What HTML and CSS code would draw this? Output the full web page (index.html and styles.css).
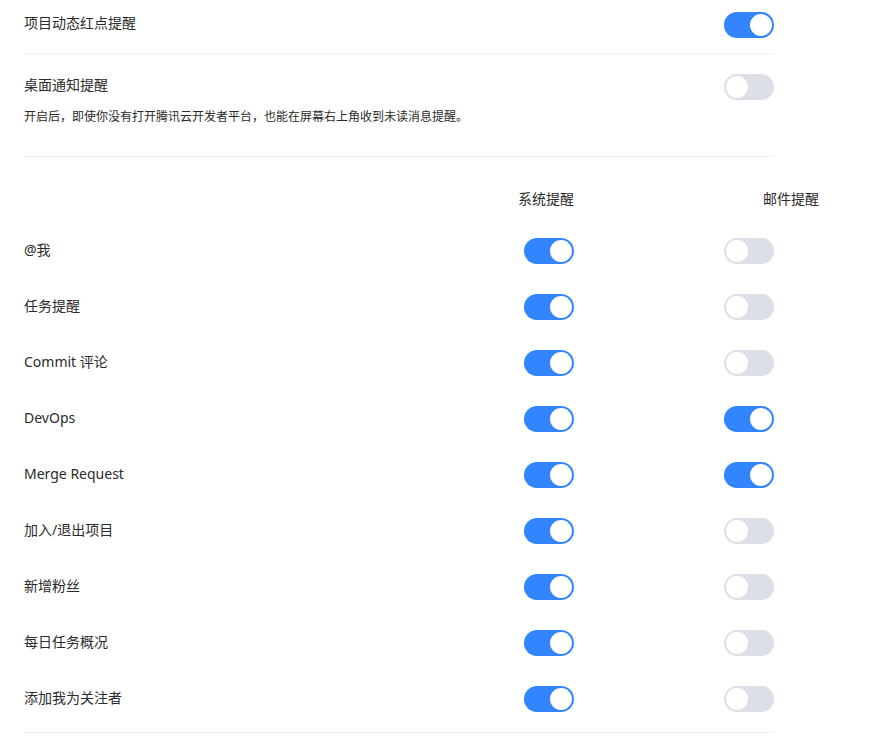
FILE: index.html
```html
<!DOCTYPE html>
<html lang="zh-CN">
<head>
<meta charset="utf-8">
<link rel="stylesheet" href="styles.css">
</head>
<body>
<div class="page">
  <section class="block block-first">
    <div class="line">
      <span class="label">项目动态红点提醒</span>
      <span class="switch on"><span class="knob"></span></span>
    </div>
  </section>
  <section class="block block-second">
    <div class="line">
      <span class="label">桌面通知提醒</span>
      <span class="switch"><span class="knob"></span></span>
    </div>
    <p class="desc">开启后，即使你没有打开腾讯云开发者平台，也能在屏幕右上角收到未读消息提醒。</p>
  </section>
  <section class="table">
    <div class="head-row">
      <span></span>
      <span class="head h1">系统提醒</span>
      <span class="head h2">邮件提醒</span>
    </div>
    <div class="row"><span class="label">@我</span><span class="switch on"><span class="knob"></span></span><span class="switch"><span class="knob"></span></span></div>
    <div class="row"><span class="label">任务提醒</span><span class="switch on"><span class="knob"></span></span><span class="switch"><span class="knob"></span></span></div>
    <div class="row"><span class="label">Commit 评论</span><span class="switch on"><span class="knob"></span></span><span class="switch"><span class="knob"></span></span></div>
    <div class="row"><span class="label">DevOps</span><span class="switch on"><span class="knob"></span></span><span class="switch on"><span class="knob"></span></span></div>
    <div class="row"><span class="label">Merge Request</span><span class="switch on"><span class="knob"></span></span><span class="switch on"><span class="knob"></span></span></div>
    <div class="row"><span class="label">加入/退出项目</span><span class="switch on"><span class="knob"></span></span><span class="switch"><span class="knob"></span></span></div>
    <div class="row"><span class="label">新增粉丝</span><span class="switch on"><span class="knob"></span></span><span class="switch"><span class="knob"></span></span></div>
    <div class="row"><span class="label">每日任务概况</span><span class="switch on"><span class="knob"></span></span><span class="switch"><span class="knob"></span></span></div>
    <div class="row"><span class="label">添加我为关注者</span><span class="switch on"><span class="knob"></span></span><span class="switch"><span class="knob"></span></span></div>
  </section>
</div>
</body>
</html>
```

FILE: styles.css
```css
html, body {
  margin: 0;
  padding: 0;
  background: #ffffff;
}
body {
  font-family: "Noto Sans", "Noto Sans CJK SC", sans-serif;
  font-size: 14px;
  color: #2b2b2b;
}
.page {
  width: 750px;
  margin-left: 24px;
}
.block {
  border-bottom: 1px solid #f2f3f5;
}
.block-first {
  padding: 12px 0 15px;
}
.block-second {
  padding: 20px 0 30px;
}
.line {
  display: flex;
  align-items: center;
  justify-content: space-between;
  height: 26px;
}
.label {
  line-height: 20px;
}
.line .label {
  padding-bottom: 5px;
}
.desc {
  margin: 8px 0 0;
  font-size: 12px;
  line-height: 18px;
}
.switch {
  position: relative;
  display: inline-block;
  width: 50px;
  height: 26px;
  border-radius: 13px;
  background: #dcdfe6;
  flex: none;
}
.switch.on {
  background: #3385ff;
}
.knob {
  position: absolute;
  top: 2px;
  left: 2px;
  width: 22px;
  height: 22px;
  border-radius: 50%;
  background: #ffffff;
}
.switch.on .knob {
  left: 26px;
}
.table {
  padding-top: 28px;
  padding-bottom: 5px;
  border-bottom: 1px solid #f2f3f5;
}
.head-row, .row {
  display: grid;
  grid-template-columns: 1fr 100px 200px;
  align-items: center;
  justify-items: end;
}
.head-row {
  height: 28px;
  margin-bottom: 10px;
}
.head {
  line-height: 20px;
}
.h2 {
  margin-right: -45px;
}
.row {
  height: 56px;
}
.row .label {
  justify-self: start;
  padding-bottom: 2px;
}
```
